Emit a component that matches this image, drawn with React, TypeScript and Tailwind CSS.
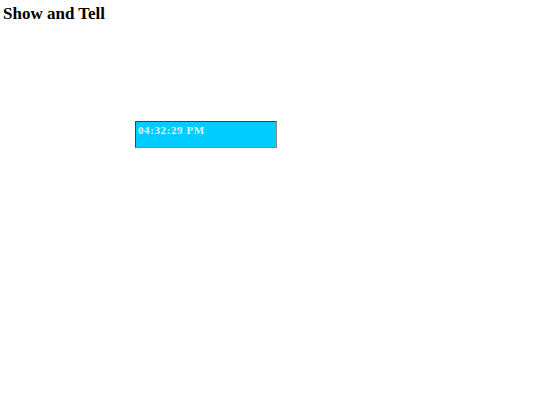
export default function App() {
  return (
    <div className="w-[540px] h-[405px] bg-white relative" style={{ fontFamily: '"Liberation Serif", serif' }}>
      <h3 className="pl-[3px] pt-[4px] text-[17px] font-bold leading-[19px] text-black">Show and Tell</h3>
      <div className="ml-[135px] mt-[98px] w-[142px] h-[27px] bg-[#00ccff] border border-t-[#444] border-l-[#444] border-b-[#888] border-r-[#888] px-[2px] pt-[2px]">
        <span className="text-[11px] font-bold tracking-[0.6px] text-[#d9f5ff] leading-[13px] block">04:32:29 PM</span>
      </div>
    </div>
  );
}
